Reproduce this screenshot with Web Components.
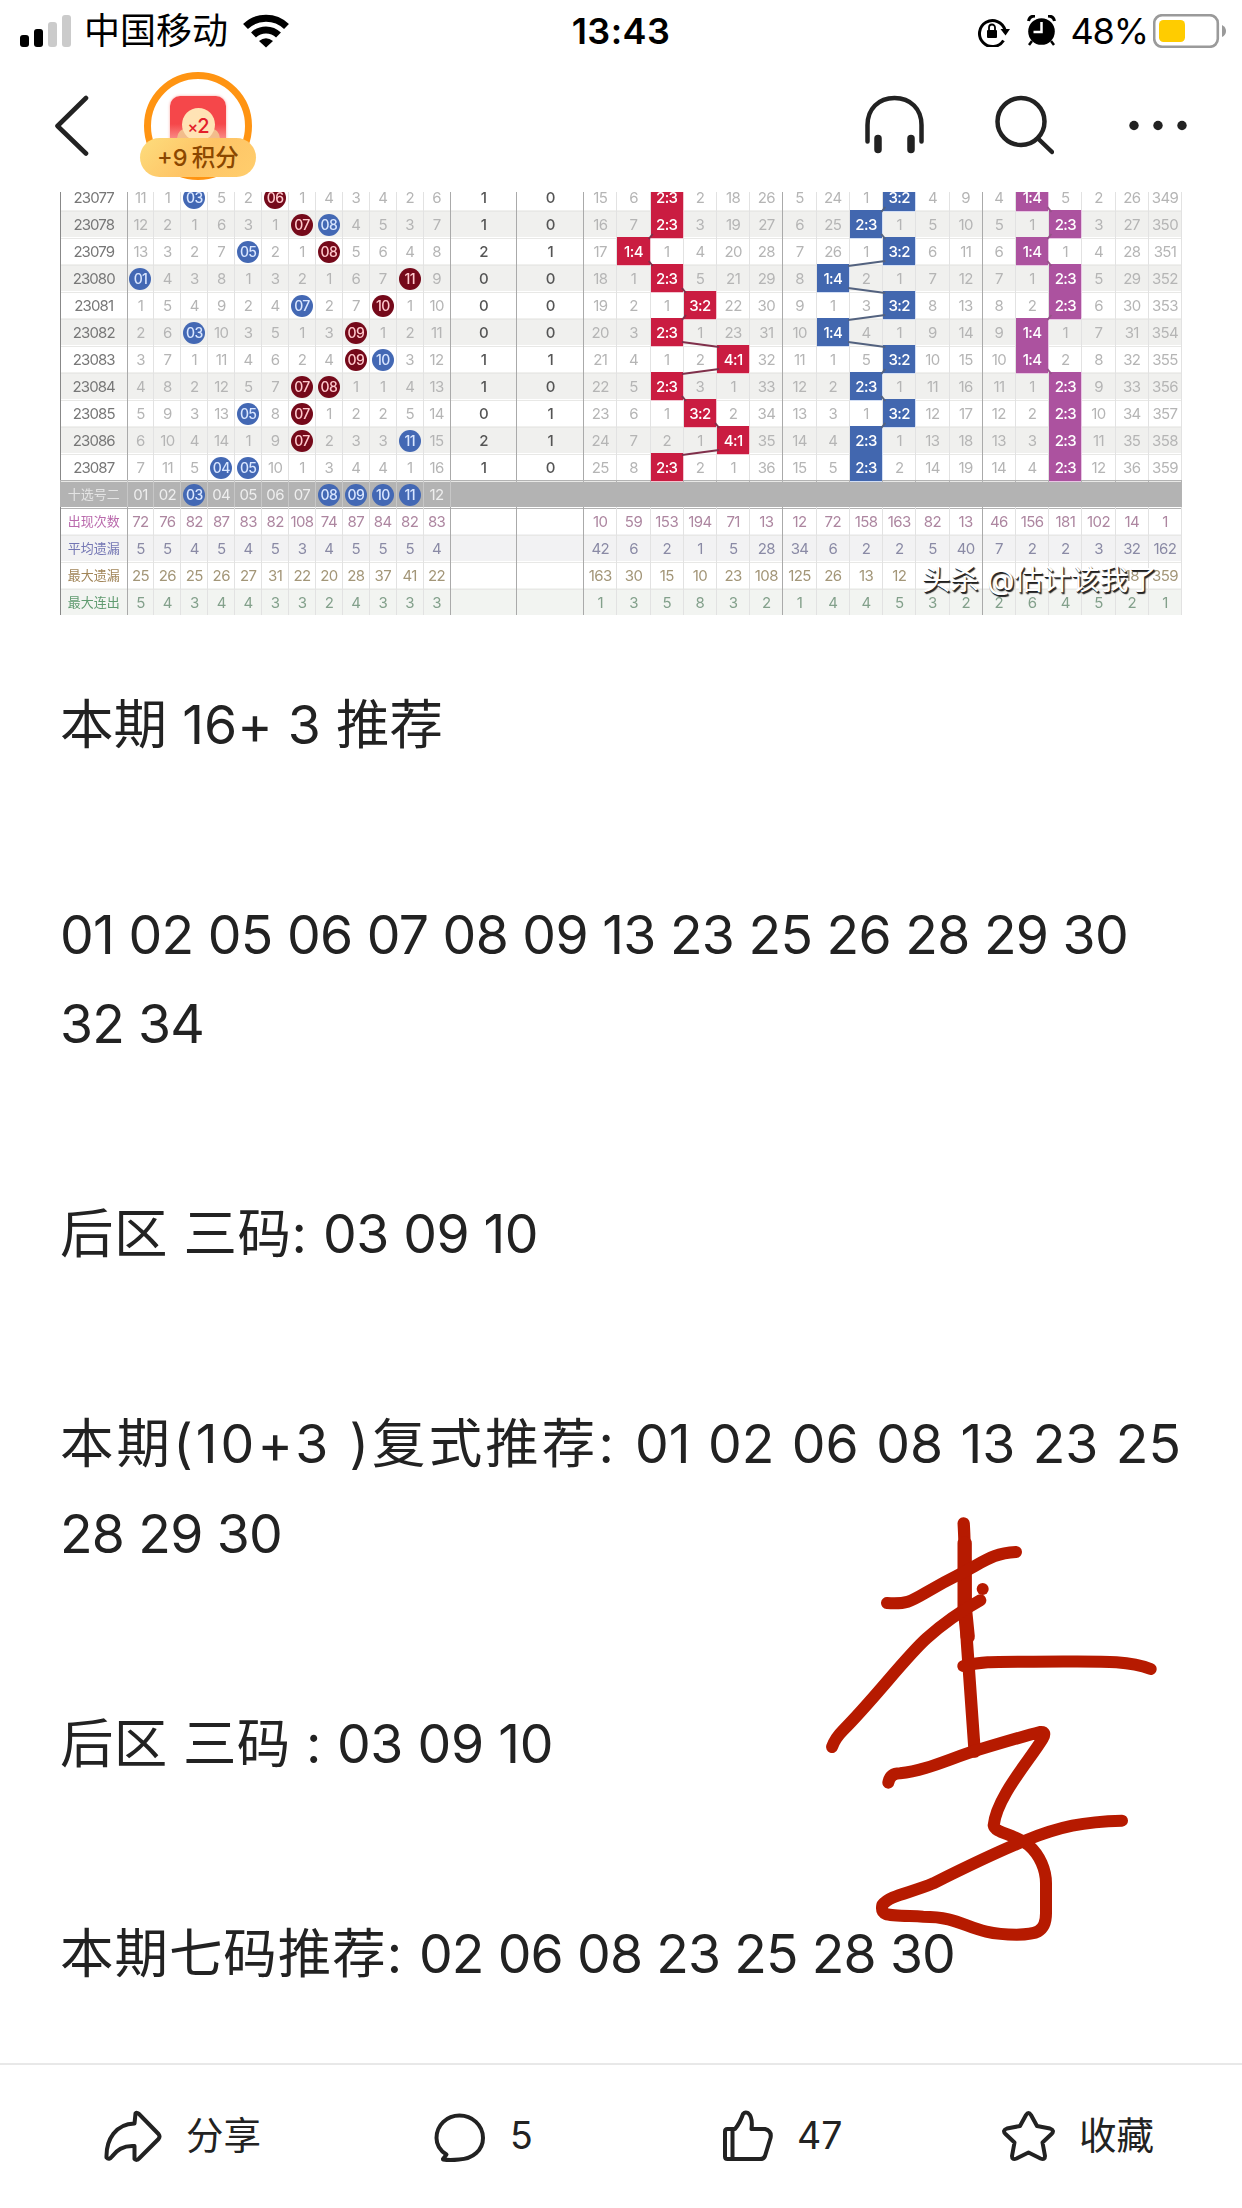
<!DOCTYPE html>
<html lang="zh-CN">
<head>
<meta charset="utf-8">
<title>本期推荐</title>
<style>
  body {
    margin: 0;
    background: #fff;
    color: #222;
    font-family: Inter, "Noto Sans CJK SC", sans-serif;
  }
</style>
</head>
<body>
<article-page>
  <status-bar slot="status"></status-bar>
  <nav-bar slot="nav"></nav-bar>
  <trend-chart slot="chart"></trend-chart>
  <text-block>
    <text-row><fit-line width="383">本期 16+ 3 推荐</fit-line></text-row>
  </text-block>
  <text-block>
    <text-row><fit-line width="1068">01 02 05 06 07 08 09 13 23 25 26 28 29 30</fit-line></text-row>
    <text-row><fit-line width="144">32 34</fit-line></text-row>
  </text-block>
  <text-block>
    <text-row><fit-line width="263">后区 三码: </fit-line><fit-line width="215">03 09 10</fit-line></text-row>
  </text-block>
  <text-block>
    <text-row><fit-line width="575">本期(10+3 )复式推荐: </fit-line><fit-line width="546" words>01 02 06 08 13 23 25</fit-line></text-row>
    <text-row><fit-line width="222">28 29 30</fit-line></text-row>
  </text-block>
  <text-block>
    <text-row><fit-line width="277">后区 三码 : </fit-line><fit-line width="216">03 09 10</fit-line></text-row>
  </text-block>
  <text-block>
    <text-row><fit-line width="359">本期七码推荐: </fit-line><fit-line width="536">02 06 08 23 25 28 30</fit-line></text-row>
  </text-block>
  <ink-signature slot="ink"></ink-signature>
  <action-bar slot="actions"></action-bar>
</article-page>

<script>
const define = (name, html, setup) => {
  const template = document.createElement('template');
  template.innerHTML = html;
  customElements.define(name, class extends HTMLElement {
    constructor() {
      super();
      this.attachShadow({ mode: 'open' });
      this.shadowRoot.appendChild(template.content.cloneNode(true));
    }
    connectedCallback() {
      if (setup) setup(this, this.shadowRoot);
    }
  });
};

define('article-page', `
  <style>
    :host {
      display: flex;
      flex-direction: column;
      position: relative;
      width: 1242px;
      height: 2208px;
      overflow: hidden;
      background: #fff;
    }
    .body {
      flex: 1;
      display: flex;
      flex-direction: column;
      gap: 120.600px;
      padding: 64.500px 60px 0;
    }
  </style>
  <slot name="status"></slot>
  <slot name="nav"></slot>
  <slot name="chart"></slot>
  <div class="body"><slot></slot></div>
  <slot name="actions"></slot>
  <slot name="ink"></slot>
`);

define('status-bar', `
  <style>
    :host {
      display: grid;
      grid-template-columns: 1fr auto 1fr;
      align-items: center;
      height: 62px;
      color: #000;
      font-size: 36px;
      line-height: 62px;
      white-space: nowrap;
    }
    .side { display: flex; align-items: center; }
    .left { padding-left: 20px; }
    .right { justify-content: flex-end; padding-right: 16px; }
    .carrier { margin: 0 15px 0 12px; }
    .time { font-weight: 600; letter-spacing: 0.4px; }
    .alarm { margin: 0 14px 0 17px; }
    .pct { letter-spacing: -1.100px; }
    .battery { margin-left: 5px; }
    svg { display: block; }
  </style>
  <div class="side left">
    <svg width="52" height="34" viewBox="20 13 52 34">
      <rect x="20" y="34" width="9" height="12" rx="3"/>
      <rect x="34" y="28" width="9" height="18" rx="3"/>
      <g fill="#cbcbcb">
        <rect x="48" y="21" width="9" height="25" rx="3"/>
        <rect x="62" y="14" width="9" height="32" rx="3"/>
      </g>
    </svg>
    <span class="carrier">中国移动</span>
    <svg width="46" height="34" viewBox="243 13 46 34">
      <g fill="none" stroke="#000" stroke-width="7">
        <path d="M245.500 25.500a29.500 29.500 0 0 1 41 0"/>
        <path d="M253.500 34a18 18 0 0 1 25 0"/>
      </g>
      <path d="M259 40q7-5.500 14 0l-7 6.500z"/>
    </svg>
  </div>
  <span class="time">13:43</span>
  <div class="side right">
    <svg width="33" height="32" viewBox="977 15 33 32">
      <path d="M1003.500 40.500A13 13 0 1 1 1005 30" fill="none" stroke="#000" stroke-width="3"/>
      <path d="M1000.500 29h9.500l-4.500 6.500z"/>
      <rect x="987" y="30" width="10" height="8" rx="1"/>
      <path d="M989 30v-2.500a3 3 0 0 1 6 0V30" fill="none" stroke="#000" stroke-width="1.800"/>
    </svg>
    <svg class="alarm" width="29" height="32" viewBox="1027 15 29 32">
      <circle cx="1041.500" cy="31.500" r="13.300"/>
      <path d="M1028.500 21q1-5 6.500-5M1048 16q5.500 0 6.500 5" fill="none" stroke="#000" stroke-width="3"/>
      <path d="M1032 41l-3 4M1051 41l3 4" stroke="#000" stroke-width="2.500"/>
      <path d="M1041.500 22v10h-8" fill="none" stroke="#fff" stroke-width="2.500"/>
    </svg>
    <span class="pct">48%</span>
    <svg class="battery" width="73" height="34" viewBox="1153 13 73 34">
      <rect x="1154.200" y="14.200" width="63.600" height="31.600" rx="8" fill="none" stroke="#9a9a9a" stroke-width="2.600"/>
      <rect x="1159" y="19" width="26" height="22" rx="4.500" fill="#fc0"/>
      <path d="M1222 24q4 2 4 6t-4 6z" fill="#9a9a9a"/>
    </svg>
  </div>
`);

define('nav-bar', `
  <style>
    :host {
      display: flex;
      align-items: center;
      box-sizing: border-box;
      height: 130px;
      padding: 0 53px 4px;
    }
    svg { display: block; }
    .ring {
      display: flex;
      position: relative;
      box-sizing: border-box;
      width: 108px;
      height: 108px;
      margin: 2px 0 0 55px;
      border: 7px solid #ff9412;
      border-radius: 50%;
      justify-content: center;
    }
    .back { margin: 2px 0 0 1px; }
    .packet {
      display: flex;
      justify-content: center;
      align-items: flex-start;
      box-sizing: border-box;
      width: 56px;
      height: 56px;
      margin-top: 17px;
      padding-top: 12px;
      border-radius: 10px 10px 4px 4px;
      background: linear-gradient(#f5474a 0 50%, #ffc9bd);
      box-shadow: 0 0 3px #f9a6a0;
    }
    .coin {
      width: 33px;
      height: 33px;
      border-radius: 50%;
      background: #ffe3b5;
      box-shadow: -11px 14px 0 -6px #f2bd8c, 11px 14px 0 -6px #f2bd8c;
      color: #e3202b;
      font-size: 20px;
      font-weight: 500;
      line-height: 36px;
      text-align: center;
      letter-spacing: -1px;
    }
    .coin small { font-size: 16px; }
    /* points pill sits over the lower part of the ring */
    .pill {
      position: absolute;
      left: -11px;
      top: 59px;
      width: 116px;
      height: 39px;
      border-radius: 20px;
      background: linear-gradient(135deg, #fddd7d, #fec466 50%, #ffce6d);
      color: #8b4700;
      font-size: 23.500px;
      font-weight: 500;
      line-height: 39px;
      text-align: center;
      white-space: nowrap;
      word-spacing: -2px;
    }
    .spacer { flex: 1; }
    .search { margin: 0 75px 0 71px; }
  </style>
  <svg class="back" width="35" height="62" viewBox="53 95 35 62">
    <path d="M85 98L56.500 126 85 153.500" fill="none" stroke="#222" stroke-width="4.600" stroke-linecap="round" stroke-linejoin="round"/>
  </svg>
  <div class="ring">
    <div class="packet"><div class="coin"><small>×</small>2</div></div>
    <div class="pill">+9 积分</div>
  </div>
  <div class="spacer"></div>
  <svg width="59" height="60" viewBox="864.500 95 59 60">
    <path d="M867 141.500V125c0-16 11-27 27-27s27 11 27 27v16.500" fill="none" stroke="#222" stroke-width="4.500" stroke-linecap="round"/>
    <path d="M877.500 138.500v11M910.500 138.500v11" stroke="#222" stroke-width="7.500" stroke-linecap="round"/>
  </svg>
  <svg class="search" width="59" height="60" viewBox="995.500 95 59 60">
    <g fill="none" stroke="#222" stroke-width="4.500" stroke-linecap="round">
      <circle cx="1021.500" cy="121.500" r="23.500"/>
      <path d="M1038.500 138.500l14 13.500"/>
    </g>
  </svg>
  <svg width="60" height="60" viewBox="1128 95 60 60" fill="#222">
    <circle cx="1133" cy="125.500" r="4.700"/>
    <circle cx="1157" cy="125.500" r="4.700"/>
    <circle cx="1181" cy="125.500" r="4.700"/>
  </svg>
`);

// b/r prefix: blue or red ball; n:m: filled ratio tile; "-": empty cell
const ROWS = [
  '23077 11 1 b03 5 2 r06 1 4 3 4 2 6 1 0 15 6 2:3 2 18 26 5 24 1 3:2 4 9 4 1:4 5 2 26 349',
  '23078 12 2 1 6 3 1 r07 b08 4 5 3 7 1 0 16 7 2:3 3 19 27 6 25 2:3 1 5 10 5 1 2:3 3 27 350',
  '23079 13 3 2 7 b05 2 1 r08 5 6 4 8 2 1 17 1:4 1 4 20 28 7 26 1 3:2 6 11 6 1:4 1 4 28 351',
  '23080 b01 4 3 8 1 3 2 1 6 7 r11 9 0 0 18 1 2:3 5 21 29 8 1:4 2 1 7 12 7 1 2:3 5 29 352',
  '23081 1 5 4 9 2 4 b07 2 7 r10 1 10 0 0 19 2 1 3:2 22 30 9 1 3 3:2 8 13 8 2 2:3 6 30 353',
  '23082 2 6 b03 10 3 5 1 3 r09 1 2 11 0 0 20 3 2:3 1 23 31 10 1:4 4 1 9 14 9 1:4 1 7 31 354',
  '23083 3 7 1 11 4 6 2 4 r09 b10 3 12 1 1 21 4 1 2 4:1 32 11 1 5 3:2 10 15 10 1:4 2 8 32 355',
  '23084 4 8 2 12 5 7 r07 r08 1 1 4 13 1 0 22 5 2:3 3 1 33 12 2 2:3 1 11 16 11 1 2:3 9 33 356',
  '23085 5 9 3 13 b05 8 r07 1 2 2 5 14 0 1 23 6 1 3:2 2 34 13 3 1 3:2 12 17 12 2 2:3 10 34 357',
  '23086 6 10 4 14 1 9 r07 2 3 3 b11 15 2 1 24 7 2 1 4:1 35 14 4 2:3 1 13 18 13 3 2:3 11 35 358',
  '23087 7 11 5 b04 b05 10 1 3 4 4 1 16 1 0 25 8 2:3 2 1 36 15 5 2:3 2 14 19 14 4 2:3 12 36 359',
  '十选号二 01 02 b03 04 05 06 07 b08 b09 b10 b11 12 - - - - - - - - - - - - - - - - - - - -',
  '出现次数 72 76 82 87 83 82 108 74 87 84 82 83 - - 10 59 153 194 71 13 12 72 158 163 82 13 46 156 181 102 14 1',
  '平均遗漏 5 5 4 5 4 5 3 4 5 5 5 4 - - 42 6 2 1 5 28 34 6 2 2 5 40 7 2 2 3 32 162',
  '最大遗漏 25 26 25 26 27 31 22 20 28 37 41 22 - - 163 30 15 10 23 108 125 26 13 12 - - - - - - 18 359',
  '最大连出 5 4 3 4 4 3 3 2 4 3 3 3 - - 1 3 5 8 3 2 1 4 4 5 3 2 2 6 4 5 2 1'
];
const ROW_H = 27;
const TILE_X = 524.3;
const TILE_W = 33.22;

define('trend-chart', `
  <style>
    :host {
      display: flex;
      flex-direction: column;
      justify-content: flex-end;
      position: relative;
      width: 1122px;
      height: 423px;
      margin-left: 60px;
      overflow: hidden;
    }
    .table { position: relative; flex: none; filter: blur(0.65px); }
    .row {
      display: grid;
      grid-template-columns: 67.5px repeat(12, 26.93px) repeat(2, 66.8px) repeat(18, 33.22px);
      height: 27px;
      background: #fff;
      color: #b5b5b5;
      font-size: 15px;
      line-height: 27px;
      letter-spacing: -0.6px;
      text-align: center;
    }
    .row:nth-child(even) { background: #f0f0ee; }
    .cell {
      display: flex;
      align-items: center;
      justify-content: center;
      box-sizing: border-box;
      border-right: 1px solid #e2e2e2;
      border-bottom: 1px solid #e8e8e6;
      padding-top: 1px;
      white-space: nowrap;
      min-width: 0;
    }
    .cell:first-child { color: #777; border-left: 1.500px solid #888; }
    .row:nth-child(-n+11) .cell:first-child { letter-spacing: -0.9px; }
    .edge { border-right: 1.500px solid #aaa; }
    .count { color: #555; font-weight: 500; }
    .ball {
      width: 22px;
      height: 22px;
      border-radius: 50%;
      line-height: 22px;
      color: #d9e6ff;
      background: #4368b4;
      font-weight: 500;
      font-size: 14px;
    }
    .ball.r { background: #75091a; color: #ffc9cd; }
    .tile { color: #fff; font-weight: 500; border-color: #f3c3cf; }
    .t0 { background: #ca1c41; }
    .t1 { background: #4267af; border-color: #d2def4; }
    .t2 { background: #ac529f; border-color: #e8c5e4; }
    .row.pick { background: #b3b3b3; color: #eee; }
    .pick .cell { border-color: #b3b3b3; }
    .pick .cell:first-child { color: #e4e4e4; }
    .pick .cell:nth-child(-n+13) { border-right-color: #c7c7c7; }
    .s12 { color: #ad86a0; }
    .s13 { color: #8a8aa5; background: #f2f2f3 !important; }
    .s14 { color: #a39678; }
    .s15 { color: #83a08b; background: #f2f4f1 !important; }
    .s12 .cell:first-child { color: #ba6bad; }
    .s13 .cell:first-child { color: #7477b4; }
    .s14 .cell:first-child { color: #a18558; }
    .s15 .cell:first-child { color: #609b70; }
    .row:nth-child(n+12) .cell:first-child { font-size: 13px; letter-spacing: 0; }
    .lines { position: absolute; left: 0; top: 0; }
    .mark {
      position: absolute;
      left: 862px;
      top: 370px;
      color: #fff;
      font-size: 28.500px;
      line-height: 36px;
      white-space: nowrap;
      text-shadow: 1.500px 1.500px 1px #222, 0.500px 0.500px 0 #222;
    }
  </style>
  <div class="table"></div>
  <div class="mark">头杀 @估计该我了</div>
`, (host, root) => {
  const table = root.querySelector('.table');
  const last = [null, null, null];
  let lines = '';
  table.innerHTML = ROWS.map((line, y) => {
    const cells = line.split(' ').map((v, x) => {
      const edge = [0, 12, 13, 14, 20, 26].includes(x) ? ' edge' : '';
      if (v === '-') return `<span class="cell${edge}"></span>`;
      if (/^[br]\d/.test(v)) {
        return `<span class="cell${edge}"><span class="ball ${v[0]}">${v.slice(1)}</span></span>`;
      }
      if (v.includes(':')) {
        const group = Math.floor((x - 15) / 6);
        const col = x - 15;
        const prev = last[group];
        if (prev !== null && prev !== col) {
          // joins the facing corners of two tiles in neighbouring rows
          const right = col > prev;
          const x1 = TILE_X + (right ? prev + 1 : prev) * TILE_W;
          const x2 = TILE_X + (right ? col : col + 1) * TILE_W;
          const d = right ? 2 : -2;
          lines += `<path d="M${x1 - d} ${y * ROW_H - 3}L${x2 + d} ${y * ROW_H + 2}" stroke="${['#80304b', '#53627f', '#965289'][group]}"/>`;
        }
        last[group] = col;
        return `<span class="cell tile t${group}">${v}</span>`;
      }
      const count = x === 13 || x === 14 ? ' count' : '';
      return `<span class="cell${edge}${count}">${v}</span>`;
    }).join('');
    return `<div class="row s${y}${y === 11 ? ' pick' : ''}">${cells}</div>`;
  }).join('') + `<svg class="lines" width="1122" height="432" stroke-width="2">${lines}</svg>`;
});

define('text-block', `
  <style>
    :host { display: flex; flex-direction: column; }
  </style>
  <slot></slot>
`);

define('text-row', `
  <style>
    :host { display: flex; }
  </style>
  <slot></slot>
`);

// A run of article text, tracked to fill its width.
// With the words attribute only the gaps between words grow.
define('fit-line', `
  <style>
    :host {
      display: block;
      flex: none;
      height: 89.500px;
      font-size: 53.500px;
      line-height: 89.500px;
    }
    span { display: inline-block; white-space: pre; }
  </style>
  <span><slot></slot></span>
`, (host, root) => {
  const span = root.querySelector('span');
  const text = host.textContent;
  const spare = Number(host.getAttribute('width')) - span.getBoundingClientRect().width;
  if (host.hasAttribute('words')) {
    span.style.wordSpacing = (spare / (text.split(' ').length - 1)).toFixed(3) + 'px';
  } else {
    span.style.letterSpacing = (spare / text.length).toFixed(3) + 'px';
  }
});

define('ink-signature', `
  <style>
    :host {
      display: block;
      position: absolute;
      left: 800px;
      top: 1500px;
    }
    svg { display: block; }
  </style>
  <svg width="400" height="460" viewBox="0 0 1200 1380" fill="none" stroke="#b61a00" stroke-width="36" stroke-linecap="round" stroke-linejoin="round">
    <path d="M491 70C498 180 493 300 501 430L524 755" stroke-width="37"/>
    <path d="M494 130V320L503 410" stroke-width="43"/>
    <path d="M261 309C345 315 335 294 480 222C560 180 580 160 648 156"/>
    <path d="M548 267h.1"/>
    <path d="M541 301C480 335 430 370 380 415C320 468 220 600 130 690Q105 715 96 741"/>
    <path d="M490 498C545 485 560 485 700 485C900 485 980 479 1052 507"/>
    <path d="M265 848Q270 820 300 820C380 812 450 775 540 748C620 724 670 709 720 696Q741 694 728 716C690 780 590 890 581 976C585 1000 640 1000 685 1035C720 1065 738 1110 738 1150V1240C738 1300 704 1303 650 1304C500 1304 500 1250 370 1250C260 1245 240 1250 247 1215C270 1185 330 1180 400 1150C500 1100 580 1060 680 1020C780 980 850 965 966 962"/>
  </svg>
`);

define('action-item', `
  <style>
    :host { display: flex; align-items: center; height: 100%; }
    .label { font-size: 37.500px; line-height: 50px; color: #222; white-space: nowrap; }
  </style>
  <slot name="icon"></slot>
  <span class="label"><slot></slot></span>
`);

define('action-bar', `
  <style>
    :host {
      display: grid;
      grid-template-columns: 330px 289px 280px 1fr;
      box-sizing: border-box;
      height: 145px;
      padding: 0 0 2px 103px;
      border-top: 2px solid #e8e8e8;
      background: #fff;
    }
    svg {
      display: block;
      fill: none;
      stroke: #222;
      stroke-width: 4;
      stroke-linecap: round;
      stroke-linejoin: round;
    }
    action-item svg { margin-right: 24px; }
  </style>
  <action-item>
    <svg slot="icon" width="59" height="54" viewBox="103 2107 59 54"><path d="M135.500 2111.500Q137 2110 139 2112L158.500 2132Q160.500 2134.500 158.500 2137L139 2156.500Q137 2159 134.500 2157V2144Q120 2143 112 2154.500Q109 2158.500 106.500 2155.500C106 2137 116 2122 134.500 2121.500Z"/></svg>分享</action-item>
  <action-item>
    <svg slot="icon" width="53" height="54" viewBox="433 2107 53 54"><path d="M443 2157L446.500 2152.500C439 2148 436.500 2142 436.500 2136C436.500 2123 447 2113.500 459.500 2113.500S483 2123 483 2136C483 2148 473 2157 459 2157.500Q450 2158.500 443 2157.500Z"/></svg>5</action-item>
  <action-item>
    <svg slot="icon" width="51" height="54" viewBox="722 2107 51 54"><path d="M727.500 2127H735Q740 2121 743 2112Q745 2109.500 748 2111Q753 2115 751.500 2127H765Q772 2129 770.500 2136L765 2154Q764 2157 760 2157H727.500Q725 2157 725 2154.500V2129.500Q725 2127 727.500 2127ZM732.500 2127V2157"/></svg>47</action-item>
  <action-item>
    <svg slot="icon" width="53" height="54" viewBox="1002 2107 53 54"><path d="M1026 2113Q1028.500 2109 1031 2113L1037 2124L1050 2126.500Q1055 2128.500 1051.500 2132L1042.500 2140.500L1045 2154Q1045 2158.500 1040.500 2156.500L1028.500 2150.500L1016.500 2156.500Q1012 2158.500 1012 2154L1014.500 2140.500L1005.500 2132Q1002 2128.500 1007 2126.500L1020 2124Z"/></svg>收藏</action-item>
`);
</script>
</body>
</html>
